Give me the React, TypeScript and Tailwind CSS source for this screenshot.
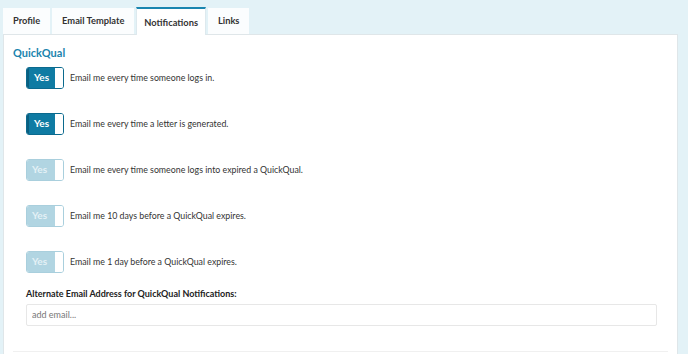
import React from 'react';

const ROWS = [
  { label: 'Email me every time someone logs in.', on: true },
  { label: 'Email me every time a letter is generated.', on: true },
  { label: 'Email me every time someone logs into expired a QuickQual.', on: false },
  { label: 'Email me 10 days before a QuickQual expires.', on: false },
  { label: 'Email me 1 day before a QuickQual expires.', on: false },
];

const TABS = ['Profile', 'Email Template', 'Notifications', 'Links'];

const Toggle: React.FC<{ on: boolean }> = ({ on }) => (
  <div
    className={
      'flex h-[22px] w-[38px] overflow-hidden rounded-[3px] border ' +
      (on ? 'border-[#0b6a8e]' : 'border-[#a9cfdd]')
    }
  >
    <div
      className={
        'flex flex-1 items-center pl-[5px] text-[10px] font-bold ' +
        (on ? 'bg-[#0f7ba3] text-white border-l-2 border-[#0a5f80]' : 'bg-[#b1d5e2] text-[#e4f1f6]')
      }
    >
      Yes
    </div>
    <div className="w-[8px] bg-white" />
  </div>
);

export default function App() {
  return (
    <div
      className="h-[354px] w-[688px] overflow-hidden bg-[#e3f2f7] pt-[8px] text-[#333]"
      style={{ fontFamily: 'Lato, "Noto Sans", sans-serif' }}
    >
      <div className="flex pl-[3px]">
        {TABS.map((t) => {
          const active = t === 'Notifications';
          return (
            <div
              key={t}
              className={
                'mr-[2px] flex h-[26px] items-center text-[9.3px] font-bold ' +
                (active
                  ? 'relative z-10 mb-[-1px] mt-[-1px] h-[28px] border-x border-t-2 border-x-[#dde9ee] border-t-[#1a86b0] bg-white px-[7px] pt-[1px]'
                  : 'bg-[#fbfdfe] px-[10px]')
              }
            >
              {t}
            </div>
          );
        })}
      </div>
      <div className="ml-[3px] mr-[10px] h-[330px] border border-[#dfe6e9] bg-white px-[9px] pt-[10px]">
        <div className="text-[11px] font-bold text-[#1a84ad]">QuickQual</div>
        <div className="mt-[5px] flex flex-col gap-[24px] pl-[13px]">
          {ROWS.map((r) => (
            <div key={r.label} className="flex items-center gap-[6px]">
              <Toggle on={r.on} />
              <span className="text-[8.8px] text-[#333]">{r.label}</span>
            </div>
          ))}
        </div>
        <div className="mt-[14px] pl-[13px] pr-[11px]">
          <div className="text-[9px] font-bold text-[#222]">Alternate Email Address for QuickQual Notifications:</div>
          <input
            placeholder="add email..."
            className="mt-[1px] h-[22px] w-full rounded-[2px] border border-[#e7e7e7] px-[5px] text-[9px] text-[#333] outline-none placeholder:text-[#777]"
          />
        </div>
        <div className="mt-[25px] border-t border-[#f0f0f0]" />
      </div>
    </div>
  );
}
